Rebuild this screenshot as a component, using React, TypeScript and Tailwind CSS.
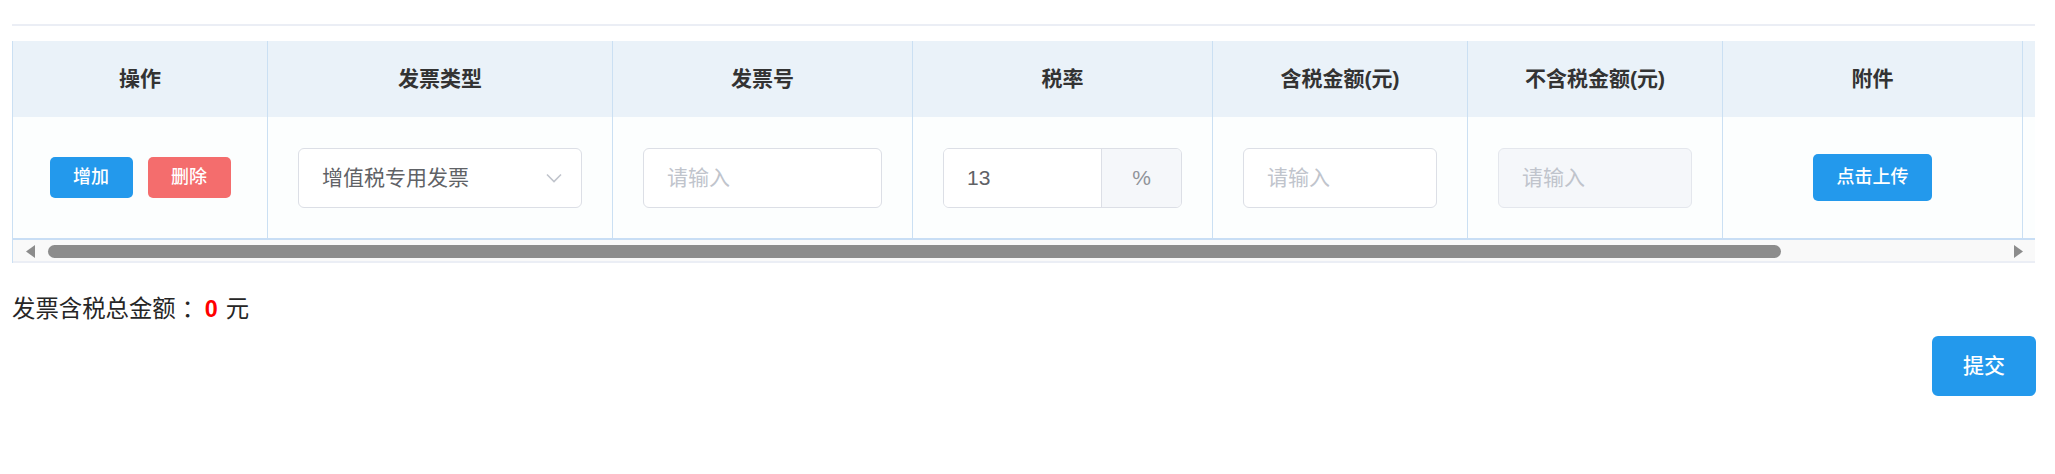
import React from "react";

const borderCol = "border-[#cbe0f3]";

function HeaderCell({ w, children }: { w: string; children?: React.ReactNode }) {
  return (
    <div
      className={`${w} shrink-0 border-r ${borderCol} flex items-center justify-center text-[21px] font-bold text-[#333333]`}
    >
      {children}
    </div>
  );
}

function BodyCell({ w, children, center }: { w: string; children?: React.ReactNode; center?: boolean }) {
  return (
    <div
      className={`${w} shrink-0 border-r ${borderCol} flex items-center px-[30px] ${center ? "justify-center" : ""}`}
    >
      {children}
    </div>
  );
}

function TextInput({ value, placeholder, disabled }: { value?: string; placeholder?: string; disabled?: boolean }) {
  return (
    <input
      defaultValue={value}
      placeholder={placeholder}
      disabled={disabled}
      className={`w-full h-[60px] rounded-[6px] border pl-[23px] pr-[15px] text-[21px] text-[#606266] placeholder:text-[#c0c4cc] outline-none ${
        disabled ? "bg-[#f5f7fa] border-[#e4e7ed]" : "bg-white border-[#dcdfe6]"
      }`}
    />
  );
}

export default function App() {
  return (
    <div className="w-[2055px] h-[474px] bg-white pl-[12px] pr-[20px] pt-[24px] font-['Liberation_Sans','Noto_Sans_CJK_SC',sans-serif]">
      <div className="h-[2px] bg-[#ebeef5]" />

      <div className={`mt-[15px] border-l ${borderCol} flex flex-col overflow-hidden`}>
        {/* header */}
        <div className="flex h-[76px] bg-[#eaf2f9]">
          <HeaderCell w="w-[255px]">操作</HeaderCell>
          <HeaderCell w="w-[345px]">发票类型</HeaderCell>
          <HeaderCell w="w-[300px]">发票号</HeaderCell>
          <HeaderCell w="w-[300px]">税率</HeaderCell>
          <HeaderCell w="w-[255px]">含税金额(元)</HeaderCell>
          <HeaderCell w="w-[255px]">不含税金额(元)</HeaderCell>
          <HeaderCell w="w-[300px]">附件</HeaderCell>
          <div className="flex-1" />
        </div>

        {/* body row */}
        <div className="flex h-[123px] bg-[#fcfefe] border-b-2 border-[#c8def5]">
          <BodyCell w="w-[255px]" center>
            <div className="flex items-center gap-[15px]">
              <button className="w-[83px] h-[41px] rounded-[5px] bg-[#2399ec] text-white text-[18px] font-medium">
                增加
              </button>
              <button className="w-[83px] h-[41px] rounded-[5px] bg-[#f46d6d] text-white text-[18px] font-medium">
                删除
              </button>
            </div>
          </BodyCell>
          <BodyCell w="w-[345px]">
            <div className="w-full h-[60px] rounded-[6px] border border-[#dcdfe6] bg-white flex items-center justify-between pl-[23px] pr-[19px] text-[21px] text-[#606266]">
              <span>增值税专用发票</span>
              <svg width="16" height="10" viewBox="0 0 16 10" fill="none">
                <path d="M1 1.5 L8 8.5 L15 1.5" stroke="#c0c4cc" strokeWidth="1.6" />
              </svg>
            </div>
          </BodyCell>
          <BodyCell w="w-[300px]">
            <TextInput placeholder="请输入" />
          </BodyCell>
          <BodyCell w="w-[300px]">
            <div className="w-full h-[60px] rounded-[6px] border border-[#dcdfe6] bg-white flex overflow-hidden">
              <input
                defaultValue="13"
                className="flex-1 min-w-0 pl-[23px] text-[21px] text-[#606266] outline-none bg-white"
              />
              <div className="w-[80px] shrink-0 border-l border-[#dcdfe6] bg-[#f5f7fa] flex items-center justify-center text-[21px] text-[#909399]">
                %
              </div>
            </div>
          </BodyCell>
          <BodyCell w="w-[255px]">
            <TextInput placeholder="请输入" />
          </BodyCell>
          <BodyCell w="w-[255px]">
            <TextInput placeholder="请输入" disabled />
          </BodyCell>
          <BodyCell w="w-[300px]" center>
            <button className="w-[119px] h-[47px] rounded-[5px] bg-[#2399ec] text-white text-[18px] font-medium">
              点击上传
            </button>
          </BodyCell>
          <div className="flex-1" />
        </div>

        {/* scrollbar */}
        <div className="h-[23px] bg-[#f9f9f9] border-b-2 border-[#ebeef5] flex items-start pt-[5px]">
          <svg className="ml-[12px] shrink-0" width="11" height="13" viewBox="0 0 11 13">
            <path d="M10 0 L10 13 L1 6.5 Z" fill="#8c8c8c" />
          </svg>
          <div className="ml-[12px] w-[1733px] h-[13px] rounded-full bg-[#8c8c8c]" />
          <div className="flex-1" />
          <svg className="mr-[11px] shrink-0" width="11" height="13" viewBox="0 0 11 13">
            <path d="M1 0 L1 13 L10 6.5 Z" fill="#8c8c8c" />
          </svg>
        </div>
      </div>

      <div className="mt-[31px] h-[30px] leading-[30px] text-[23.4px] text-[#262626] flex items-center">
        <span>发票含税总金额</span>
        <span className="ml-[6px] w-[23px]">：</span>
        <span className="text-[#ff0000] font-bold">0</span>
        <span className="ml-[8px]">元</span>
      </div>

      <div className="mt-[12px] flex justify-end">
        <button className="w-[104px] h-[60px] rounded-[6px] bg-[#2399ec] text-white text-[21px] font-medium -mr-[1px]">
          提交
        </button>
      </div>
    </div>
  );
}
